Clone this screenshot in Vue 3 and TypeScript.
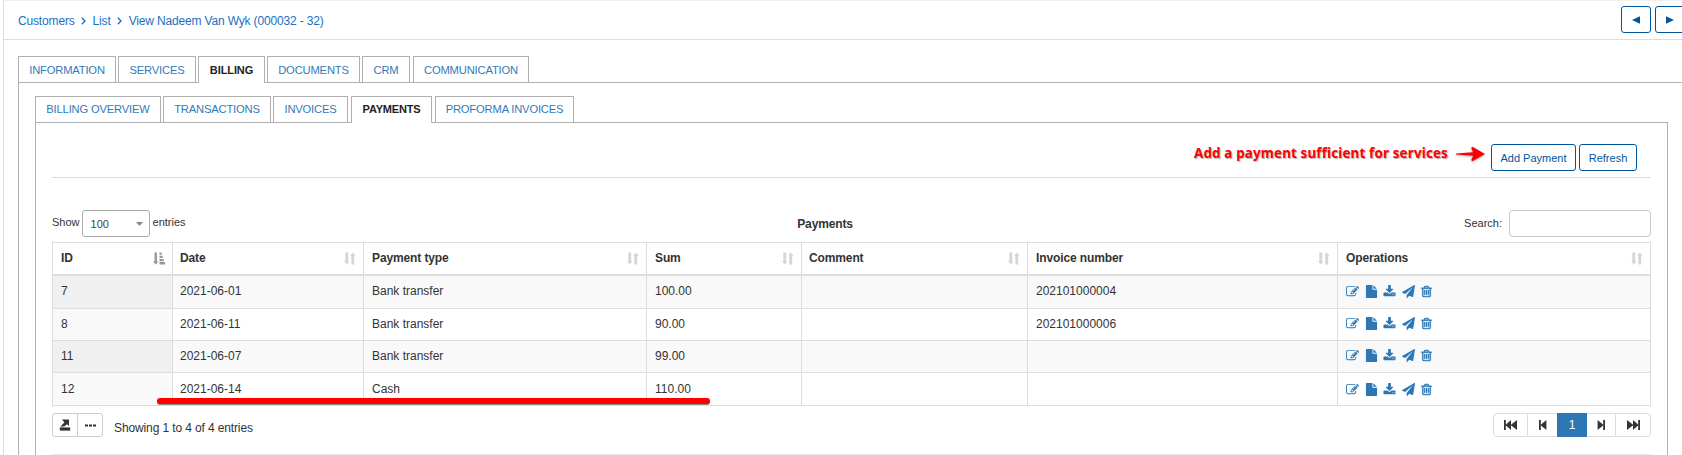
<script setup lang="ts">
interface Payment {
  id: number
  date: string
  type: string
  sum: string
  invoice: string
}

const tabs: string[] = ['INFORMATION', 'SERVICES', 'BILLING', 'DOCUMENTS', 'CRM', 'COMMUNICATION']
const subTabs: string[] = ['BILLING OVERVIEW', 'TRANSACTIONS', 'INVOICES', 'PAYMENTS', 'PROFORMA INVOICES']
const columns: string[] = ['ID', 'Date', 'Payment type', 'Sum', 'Comment', 'Invoice number', 'Operations']

const payments: Payment[] = [
  { id: 7, date: '2021-06-01', type: 'Bank transfer', sum: '100.00', invoice: '202101000004' },
  { id: 8, date: '2021-06-11', type: 'Bank transfer', sum: '90.00', invoice: '202101000006' },
  { id: 11, date: '2021-06-07', type: 'Bank transfer', sum: '99.00', invoice: '' },
  { id: 12, date: '2021-06-14', type: 'Cash', sum: '110.00', invoice: '' },
]

const operations: { name: string; path: string }[] = [
  {
    name: 'edit',
    path: 'M888 1184l116-116-152-152-116 116v56h96v96h56zm440-720q-16-16-33 1l-350 350q-17 17-1 33t33-1l350-350q17-17 1-33zm80 594v190q0 119-84.5 203.5t-203.5 84.5h-832q-119 0-203.5-84.5t-84.5-203.5v-832q0-119 84.5-203.5t203.5-84.5h832q63 0 117 25 15 7 18 23 3 17-9 29l-49 49q-14 14-32 8-23-6-45-6h-832q-66 0-113 47t-47 113v832q0 66 47 113t113 47h832q66 0 113-47t47-113v-126q0-13 9-22l64-64q15-15 35-7t20 29zm-96-738l288 288-672 672h-288v-288zm444 132l-92 92-288-288 92-92q28-28 68-28t68 28l152 152q28 28 28 68t-28 68z',
  },
  {
    name: 'file',
    path: 'M1152 512v-472q22 14 36 28l408 408q14 14 28 36h-472zm-128 32q0 40 28 68t68 28h544v1056q0 40-28 68t-68 28h-1344q-40 0-68-28t-28-68v-1600q0-40 28-68t68-28h800v544z',
  },
  {
    name: 'download',
    path: 'M1344 1344q0-26-19-45t-45-19-45 19-19 45 19 45 45 19 45-19 19-45zm256 0q0-26-19-45t-45-19-45 19-19 45 19 45 45 19 45-19 19-45zm128-224v320q0 40-28 68t-68 28h-1472q-40 0-68-28t-28-68v-320q0-40 28-68t68-28h465l135 136q58 56 136 56t136-56l136-136h464q40 0 68 28t28 68zm-325-569q17 41-14 70l-448 448q-18 19-45 19t-45-19l-448-448q-31-29-14-70 17-39 59-39h256v-448q0-26 19-45t45-19h256q26 0 45 19t19 45v448h256q42 0 59 39z',
  },
  {
    name: 'send',
    path: 'M1764 11q33 24 27 64l-256 1536q-5 29-32 45-14 8-31 8-11 0-24-5l-453-185-242 295q-18 23-49 23-13 0-22-4-19-7-30.5-23.5t-11.5-36.5v-349l864-1059-1069 925-395-162q-37-14-40-55-2-40 32-59l1664-960q15-9 32-9 20 0 36 11z',
  },
  {
    name: 'trash',
    path: 'M704 736v576q0 14-9 23t-23 9h-64q-14 0-23-9t-9-23v-576q0-14 9-23t23-9h64q14 0 23 9t9 23zm256 0v576q0 14-9 23t-23 9h-64q-14 0-23-9t-9-23v-576q0-14 9-23t23-9h64q14 0 23 9t9 23zm256 0v576q0 14-9 23t-23 9h-64q-14 0-23-9t-9-23v-576q0-14 9-23t23-9h64q14 0 23 9t9 23zm128 724v-948h-896v948q0 22 7 40.5t14.5 27 10.5 8.5h832q3 0 10.5-8.5t14.5-27 7-40.5zm-672-1076h448l-48-117q-7-9-17-11h-317q-10 2-17 11zm928 32v64q0 14-9 23t-23 9h-96v948q0 83-47 143.5t-113 60.5h-832q-66 0-113-58.5t-47-141.5v-952h-96q-14 0-23-9t-9-23v-64q0-14 9-23t23-9h309l70-167q15-37 54-63t79-26h320q40 0 79 26t54 63l70 167h309q14 0 23 9t9 23z',
  },
]
</script>

<template>
  <div class="page">
    <header class="topbar">
      <nav class="crumbs">
        <a>Customers</a>
        <svg class="chev" viewBox="0 0 5 8"><path d="M0.8 0.8 4 4 0.8 7.2" /></svg>
        <a>List</a>
        <svg class="chev" viewBox="0 0 5 8"><path d="M0.8 0.8 4 4 0.8 7.2" /></svg>
        <a>View Nadeem Van Wyk (000032 - 32)</a>
      </nav>
      <div class="pager-nav">
        <button class="btn nav"><svg viewBox="0 0 8 8"><path d="M8 0.3V7.7L0 4z" /></svg></button>
        <button class="btn nav"><svg viewBox="0 0 8 8"><path d="M0 0.3V7.7L8 4z" /></svg></button>
      </div>
    </header>

    <ul class="tabs main-tabs">
      <li v-for="t in tabs" :key="t" :class="{ active: t === 'BILLING' }">{{ t }}</li>
    </ul>
    <div class="pane">
      <ul class="tabs sub-tabs">
        <li v-for="t in subTabs" :key="t" :class="{ active: t === 'PAYMENTS' }">{{ t }}</li>
      </ul>
      <section class="panel">
        <div class="actions">
          <span class="note">Add a payment sufficient for services</span>
          <svg class="arrow" viewBox="0 0 32 18">
            <path d="M1 8.4 18 7.2 16.4 3.4Q16.2 1.6 18.4 2.2L30 9 18.4 15.8Q16.2 16.4 16.4 14.6L18.2 10.8 1 9.4z" />
          </svg>
          <button class="btn add">Add Payment</button>
          <button class="btn refresh">Refresh</button>
        </div>

        <div class="controls">
          <div class="length">
            <span>Show</span>
            <span class="select">100<svg viewBox="0 0 7 4"><path d="M0 0H7L3.5 4z" /></svg></span>
            <span>entries</span>
          </div>
          <strong class="title">Payments</strong>
          <label class="search"><span>Search:</span><input type="text" /></label>
        </div>

        <div class="table-wrap">
          <table>
            <colgroup>
              <col v-for="(c, i) in columns" :key="c" :class="'c' + i" />
            </colgroup>
            <thead>
              <tr>
                <th v-for="(c, i) in columns" :key="c">
                  <div class="head">
                    <span>{{ c }}</span>
                    <svg v-if="i === 0" class="sort on" viewBox="0 0 12 13">
                      <path d="M1.5 0.5H4V9.5H5.5L2.75 12.5 0 9.5H1.5z" />
                      <path d="M6.5 0.5h2.2v2.3h-2.2zM6.5 3.7h3.2v2.3h-3.2zM6.5 6.9h4.2v2.3h-4.2zM6.5 10.1h5.5v2.4h-5.5z" />
                    </svg>
                    <svg v-else class="sort" viewBox="0 0 12 13">
                      <path d="M1.3 0.5H4.2V9.3H5.7L2.75 12.5 0 9.3H1.3z" />
                      <path d="M7.3 12.5H10.2V3.7H11.7L8.75 0.5 6 3.7H7.3z" />
                    </svg>
                  </div>
                </th>
              </tr>
            </thead>
            <tbody>
              <tr v-for="p in payments" :key="p.id">
                <td>{{ p.id }}</td>
                <td>{{ p.date }}</td>
                <td>{{ p.type }}</td>
                <td>{{ p.sum }}</td>
                <td></td>
                <td>{{ p.invoice }}</td>
                <td>
                  <div class="ops">
                    <svg v-for="o in operations" :key="o.name" :class="o.name" viewBox="0 0 1792 1792">
                      <path :d="o.path" />
                    </svg>
                  </div>
                </td>
              </tr>
            </tbody>
          </table>
          <div class="underline"></div>
        </div>

        <footer class="bottom">
          <div class="group">
            <button>
              <svg class="export" viewBox="0 0 12 12">
                <path d="M3 0.5H10V7L8 5.2 5.2 7.6H1.4L5.4 3.4z" />
                <path d="M0.8 8.4H11.2V11.6H0.8z" />
              </svg>
            </button>
            <button>
              <svg class="dots" viewBox="0 0 11 3"><path d="M0 0.5h3v2H0zM4 0.5h3v2H4zM8 0.5h3v2H8z" /></svg>
            </button>
          </div>
          <span class="info">Showing 1 to 4 of 4 entries</span>
          <div class="pages">
            <span class="p1"><svg viewBox="0 0 13 10"><path d="M0 0h1.8v10H0zM7 0v10L1.4 5zM13 0v10L6.6 5z" /></svg></span>
            <span class="p2"><svg viewBox="0 0 13 10"><path d="M3 0h1.8v10H3zM10.4 0v10L4.4 5z" /></svg></span>
            <span class="current">1</span>
            <span class="p4"><svg viewBox="0 0 13 10"><path d="M8.2 0H10v10H8.2zM2.6 0v10L8.6 5z" /></svg></span>
            <span class="p5"><svg viewBox="0 0 13 10"><path d="M11.2 0H13v10h-1.8zM6 0v10L11.6 5zM0 0v10L6.4 5z" /></svg></span>
          </div>
        </footer>
        <div class="rule"></div>
      </section>
    </div>
  </div>
</template>

<style>
body {
  margin: 0;
  background: #fff;
  overflow: hidden;
}
</style>

<style scoped>
.page {
  box-sizing: border-box;
  height: 455px;
  margin-left: 3px;
  border-left: 1px solid #ddd;
  border-top: 1px solid #f0f0f0;
  overflow: hidden;
  font-family: "Liberation Sans", Arial, sans-serif;
  font-size: 12px;
  color: #333;
}
.topbar {
  box-sizing: border-box;
  height: 39px;
  border-bottom: 1px solid #ddd;
  display: flex;
  justify-content: space-between;
  padding: 5px 0 0 14px;
}
.crumbs {
  display: flex;
  align-items: center;
  height: 30px;
  color: #1a6fc4;
  letter-spacing: -0.16px;
  white-space: nowrap;
}
.chev {
  width: 5px;
  height: 8px;
  margin: 0 7px 0 6px;
  fill: none;
  stroke: #1a6fc4;
  stroke-width: 1.3;
}
.pager-nav {
  display: flex;
  gap: 4px;
  margin-right: -3px;
}
.btn {
  box-sizing: border-box;
  height: 27px;
  padding: 2px 0 0;
  border: 1px solid #00569d;
  border-radius: 3px;
  background: #fff;
  color: #00569d;
  font: 11px/23px "Liberation Sans", Arial, sans-serif;
}
.nav {
  width: 30px;
  padding: 0;
  display: flex;
  align-items: center;
  justify-content: center;
}
.nav svg {
  width: 8px;
  height: 8px;
  fill: #00569d;
}
.tabs {
  display: grid;
  list-style: none;
  margin: 0;
  padding: 0;
  height: 27px;
}
.tabs li {
  box-sizing: border-box;
  height: 26px;
  border: 1px solid #b0b0b0;
  border-bottom: 0;
  color: #337ab7;
  font-size: 11.2px;
  letter-spacing: -0.17px;
  line-height: 27px;
  text-align: center;
  white-space: nowrap;
}
.tabs li.active {
  height: 27px;
  background: #fff;
  color: #222;
  font-weight: bold;
  font-size: 11px;
}
.main-tabs {
  position: relative;
  margin: 16px 0 -1px 14px;
  grid-template-columns: 98px 78px 67px 93px 48px 116px;
  column-gap: 2px;
}
.main-tabs li.active {
  letter-spacing: -0.1px;
}
.main-tabs li:nth-child(6) {
  margin: 0 -1px 0 1px;
}
.pane {
  margin-left: 14px;
  border: 1px solid #b0b0b0;
  border-right: 0;
  padding: 13px 14px 0 16px;
}
.sub-tabs {
  position: relative;
  margin-bottom: -1px;
  grid-template-columns: 126px 108px 75px 81px 139px;
  column-gap: 2px;
}
.sub-tabs li {
  line-height: 25px;
}
.sub-tabs li:nth-child(4) {
  margin: 0 -1px 0 1px;
}
.sub-tabs li:nth-child(5) {
  margin: 0 -2px 0 2px;
}
.panel {
  box-sizing: border-box;
  height: 345px;
  border: 1px solid #b0b0b0;
  padding: 21px 16px 0;
}
.actions {
  display: flex;
  justify-content: flex-end;
  height: 33px;
  padding-right: 14px;
  border-bottom: 1px solid #ddd;
}
.note {
  font: bold 13.4px/19px "Noto Sans", "Open Sans", sans-serif;
  letter-spacing: 0.16px;
  color: #f00;
  text-shadow: 1px 1px 1px #aaa;
  white-space: nowrap;
}
.arrow {
  width: 32px;
  height: 18px;
  margin: 1px 4px 0 7px;
  fill: #f00;
  filter: drop-shadow(0 1px 1px #aaa);
}
.add {
  width: 85px;
  margin-right: 3px;
}
.refresh {
  width: 58px;
}
.controls {
  display: grid;
  grid-template-columns: 1fr auto 1fr;
  margin-top: 32px;
  height: 32px;
  font-size: 11px;
}
.length {
  display: flex;
  line-height: 25px;
}
.select {
  box-sizing: border-box;
  display: flex;
  align-items: center;
  justify-content: space-between;
  width: 68px;
  height: 27px;
  margin: 0 3px 0 2px;
  padding: 2px 6px 0 8px;
  border: 1px solid #aaa;
  border-radius: 3px;
  color: #444;
}
.select svg {
  width: 7px;
  height: 4px;
  margin-top: -2px;
  fill: #888;
}
.title {
  font-size: 12px;
  letter-spacing: -0.15px;
  line-height: 29px;
  margin-right: 53px;
}
.search {
  display: flex;
  justify-content: flex-end;
  line-height: 26px;
}
.search input {
  box-sizing: border-box;
  width: 142px;
  height: 27px;
  margin: 0 0 0 7px;
  border: 1px solid #c8c8c8;
  border-radius: 4px;
}
.table-wrap {
  position: relative;
}
table {
  table-layout: fixed;
  width: 1599px;
  border-collapse: separate;
  border-spacing: 0;
  border-left: 1px solid #ddd;
  border-top: 1px solid #ddd;
}
.c0 { width: 120px; }
.c1 { width: 191px; }
.c2 { width: 283px; }
.c3 { width: 155px; }
.c4 { width: 226px; }
.c5 { width: 310px; }
.c6 { width: 313px; }
th,
td {
  box-sizing: border-box;
  border-right: 1px solid #ddd;
  border-bottom: 1px solid #ddd;
  padding: 0 7px 1px 8px;
  text-align: left;
  vertical-align: middle;
  line-height: 14px;
}
th:nth-child(3n + 2),
td:nth-child(3n + 2) {
  padding-left: 7px;
}
th {
  height: 33px;
  border-bottom-width: 2px;
  letter-spacing: -0.12px;
}
td {
  height: 32px;
  padding-bottom: 2px;
}
tbody tr:first-child td,
tbody tr:last-child td {
  height: 33px;
}
tbody tr:last-child td {
  padding-bottom: 0;
}
tbody tr:nth-child(odd) td {
  background: #f9f9f9;
}
tbody td:first-child {
  background: #f9f9f9;
}
tbody tr:nth-child(odd) td:first-child {
  background: #f0f0f0;
}
.head {
  display: flex;
  justify-content: space-between;
  align-items: center;
}
.sort {
  width: 12px;
  height: 13px;
  fill: #d6d6d6;
}
.sort.on {
  fill: #999;
}
.ops {
  display: flex;
  align-items: center;
  height: 14px;
}
.ops svg {
  width: 13px;
  height: 13px;
  fill: #2e77b5;
}
.ops .file { margin-left: 6px; }
.ops .download { margin-left: 5px; }
.ops .send { margin-left: 6px; }
.ops .trash {
  margin-left: 5px;
  stroke: #2e77b5;
  stroke-width: 60;
}
.underline {
  position: absolute;
  left: 105px;
  top: 156px;
  width: 553px;
  height: 6px;
  border-radius: 3px;
  background: #f00;
  box-shadow: 0 1px 0 #888;
}
.bottom {
  display: flex;
  height: 24px;
  margin-top: 7px;
}
.group {
  display: flex;
}
.group button {
  box-sizing: border-box;
  width: 26px;
  height: 24px;
  display: flex;
  align-items: center;
  justify-content: center;
  padding: 0;
  border: 1px solid #ccc;
  border-radius: 3px 0 0 3px;
  background: #fff;
}
.group button + button {
  margin-left: -1px;
  border-radius: 0 3px 3px 0;
}
.export {
  width: 12px;
  height: 12px;
  fill: #333;
}
.dots {
  width: 11px;
  height: 3px;
  fill: #333;
}
.info {
  margin-left: 11px;
  letter-spacing: -0.12px;
  line-height: 31px;
}
.pages {
  margin-left: auto;
  display: flex;
}
.pages span {
  box-sizing: border-box;
  height: 24px;
  display: flex;
  align-items: center;
  justify-content: center;
  border: 1px solid #ddd;
}
.pages svg {
  width: 13px;
  height: 10px;
  fill: #333;
}
.pages .p1 {
  width: 35px;
  border-radius: 4px 0 0 4px;
}
.pages .p2 {
  width: 29px;
  border-left: 0;
  border-right: 0;
}
.pages .current {
  width: 30px;
  border-color: #2e77b5;
  background: #2e77b5;
  color: #fff;
}
.pages .p4 {
  width: 29px;
  border-left: 0;
}
.pages .p5 {
  width: 35px;
  border-left: 0;
  border-radius: 0 4px 4px 0;
}
.rule {
  margin-top: 17px;
  height: 1px;
  background: #e8e8e8;
}
</style>
